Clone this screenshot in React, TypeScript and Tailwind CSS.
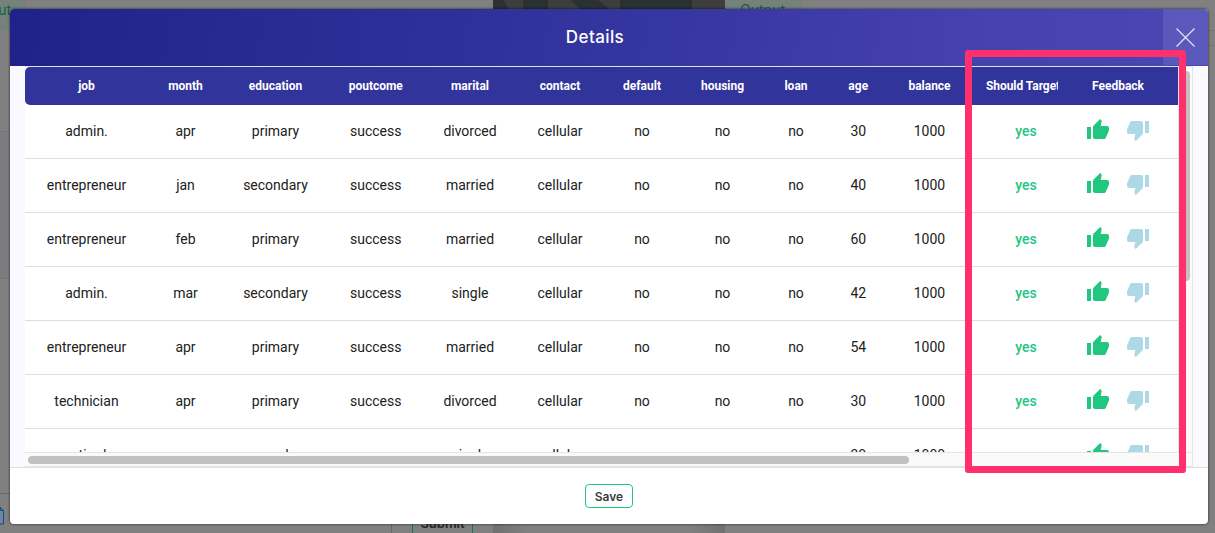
const columns = [
  { name: 'job', width: 'w-[123px]' },
  { name: 'month', width: 'w-[75px]' },
  { name: 'education', width: 'w-[105px]' },
  { name: 'poutcome', width: 'w-[95.5px]' },
  { name: 'marital', width: 'w-[93px]' },
  { name: 'contact', width: 'w-[87px]' },
  { name: 'default', width: 'w-[77px]' },
  { name: 'housing', width: 'w-[84px]' },
  { name: 'loan', width: 'w-[63px]' },
  { name: 'age', width: 'w-[61.5px]' },
  { name: 'balance', width: 'w-[81px]' },
];

const rows = [
  ['admin.', 'apr', 'primary', 'success', 'divorced', 'cellular', 'no', 'no', 'no', '30', '1000'],
  ['entrepreneur', 'jan', 'secondary', 'success', 'married', 'cellular', 'no', 'no', 'no', '40', '1000'],
  ['entrepreneur', 'feb', 'primary', 'success', 'married', 'cellular', 'no', 'no', 'no', '60', '1000'],
  ['admin.', 'mar', 'secondary', 'success', 'single', 'cellular', 'no', 'no', 'no', '42', '1000'],
  ['entrepreneur', 'apr', 'primary', 'success', 'married', 'cellular', 'no', 'no', 'no', '54', '1000'],
  ['technician', 'apr', 'primary', 'success', 'divorced', 'cellular', 'no', 'no', 'no', '30', '1000'],
  ['retired', 'mar', 'secondary', 'success', 'single', 'cellular', 'no', 'no', 'no', '30', '1000'],
];

function ThumbUp() {
  return (
    <svg className="size-6 fill-[#22c77f]" viewBox="0 0 24 24">
      <path d="M1 21h4V9H1v12zm22-11c0-1.1-.9-2-2-2h-6.31l.95-4.57.03-.32c0-.41-.17-.79-.44-1.06L14.17 1 7.59 7.59C7.22 7.95 7 8.45 7 9v10c0 1.1.9 2 2 2h9c.83 0 1.54-.5 1.84-1.22l3.02-7.05c.09-.23.14-.47.14-.73v-2z" />
    </svg>
  );
}

function ThumbDown() {
  return (
    <svg className="size-6 fill-[#add8e6]" viewBox="0 0 24 24">
      <path d="M15 3H6c-.83 0-1.54.5-1.84 1.22l-3.02 7.05c-.09.23-.14.47-.14.73v2c0 1.1.9 2 2 2h6.31l-.95 4.57-.03.32c0 .41.17.79.44 1.06L9.83 23l6.59-6.59c.36-.36.58-.86.58-1.41V5c0-1.1-.9-2-2-2zm4 0v12h4V3h-4z" />
    </svg>
  );
}

function Backdrop() {
  return (
    <div className="absolute inset-0 flex flex-col bg-[#808080] font-['Inter',sans-serif]">
      <div className="flex h-[30px] shrink-0 text-[14px]">
        <div className="flex h-[30px] w-[26px] justify-end overflow-hidden bg-[#74827b] pr-[15px] leading-[20px] text-[#11633f]">
          <span>Output</span>
        </div>
        <div className="w-[467px]" />
        <svg className="h-[30px] w-[232px] bg-[#3e3e3e]" viewBox="0 0 232 30">
          <path d="M0 0h10l8 12H0zM30 0h25v12H30zM78 0h27l15 12H90zM127 0h72v12h-72z" fill="#293133" />
        </svg>
        <div className="w-[78px] bg-[#74827b] pl-[15px] leading-[19px] text-[#11633f]">Output</div>
      </div>
      <div className="flex h-[463px] shrink-0 justify-between">
        <div className="w-[10px] pt-[101px]">
          <div className="h-[148px] border-y border-[#74747d] bg-[#7c7c7e]" />
        </div>
        <div className="w-[7px]">
          <div className="h-4 border-y border-[#74747a]" />
        </div>
      </div>
      <div className="flex h-10">
        <div className="h-full w-[392px] border-r border-t border-[#696969] pt-[13px]">
          <svg className="h-[18px] w-1" viewBox="0 0 4 18" fill="#7086a0" stroke="#174a83">
            <path d="M-1 .5h1.5l3 3v13.500h-5M.5.5v3h3" />
          </svg>
        </div>
        <div className="ml-5 h-full w-[61px] overflow-hidden border-x border-[#13784d] pt-[22px] text-center text-[13px] font-semibold leading-[17px] text-[#272727]">
          Submit
        </div>
        <div className="ml-5 h-full w-[232px] bg-[linear-gradient(90deg,#707070,#808080_15%,#808080_85%,#707070)]" />
      </div>
    </div>
  );
}

export default function App() {
  return (
    <div className="relative h-[533px] w-[1215px] overflow-hidden font-['Roboto',sans-serif]">
      <Backdrop />
      <div className="relative pl-[10px] pt-[9px]">
        <section className="flex h-[515px] w-[1198px] flex-col overflow-hidden rounded bg-white shadow-[0_0_2px_1px_rgba(0,0,0,0.35)]">
          <header className="flex h-[57px] shrink-0 bg-[linear-gradient(100deg,#1f2389,#2c2f97_33%,#3636a0_54%,#4541af_80%,#4a46b4)]">
            <h1 className="flex-1 pl-[17px] text-center font-['Inter',sans-serif] text-[17px] font-medium leading-[57px] tracking-[0.4px] text-white">
              Details
            </h1>
            <button className="flex h-14 w-[45px] items-center justify-center bg-white/10">
              <svg className="h-[19px] w-[19px]" viewBox="0 0 19 19" stroke="#e4e3f4" strokeWidth="1.2">
                <path d="M.5.5l18 18M18.5.5l-18 18" />
              </svg>
            </button>
          </header>
          <div className="flex h-[402px] shrink-0 border-b border-[#dedee5] bg-[#f9f9ff] pl-[15px]">
            <div className="flex h-[401px] w-[1168px] flex-col border-t border-[#e0e0e8] bg-[#fafafa]">
              <div className="flex h-[385px]">
                <div className="w-[1153px] overflow-hidden bg-white">
                  <div className="flex h-[38px] items-center rounded-l-[5px] bg-[#31349b] text-center text-[12px] font-bold text-white">
                    {columns.map((c) => (
                      <div key={c.name} className={c.width}>{c.name}</div>
                    ))}
                    <div className="w-[111px] pl-4">
                      <div className="w-[72px] overflow-hidden whitespace-nowrap text-left tracking-[-0.06px]">Should Target</div>
                    </div>
                    <div className="w-[74px]">Feedback</div>
                  </div>
                  {rows.map((row, i) => (
                    <div key={i} className="flex h-[54px] items-center border-b border-[#dddddd] text-center text-[14px] text-[#212121]">
                      {row.map((cell, j) => (
                        <div key={j} className={columns[j].width}>{cell}</div>
                      ))}
                      <div className="w-[111px] pl-px font-medium text-[#22c77f]">yes</div>
                      <div className="flex w-[74px] justify-center gap-4 pb-[3px]">
                        <ThumbUp />
                        <ThumbDown />
                      </div>
                    </div>
                  ))}
                </div>
                <div className="w-[15px] border-x border-[#e5e5e5] pl-[3px] pt-[4px]">
                  <div className="h-[210px] w-[8px] rounded-full bg-[#c1c1c1]" />
                </div>
              </div>
              <div className="h-[15px] border-y border-r border-[#e5e5e5] pl-[3px] pt-[3px]">
                <div className="h-2 w-[881px] rounded-full bg-[#c1c1c1]" />
              </div>
            </div>
          </div>
          <footer className="flex flex-1 justify-center pt-4">
            <button className="h-6 w-12 rounded border border-[#22c77f] font-['Inter',sans-serif] text-[12px] font-semibold leading-[23px] text-[#3d3d3d]">
              Save
            </button>
          </footer>
        </section>
      </div>
      <div className="pointer-events-none absolute left-[965px] top-[50px] h-[423px] w-[221px] rounded-[3px] border-[7px] border-[#ff306b]" />
    </div>
  );
}
